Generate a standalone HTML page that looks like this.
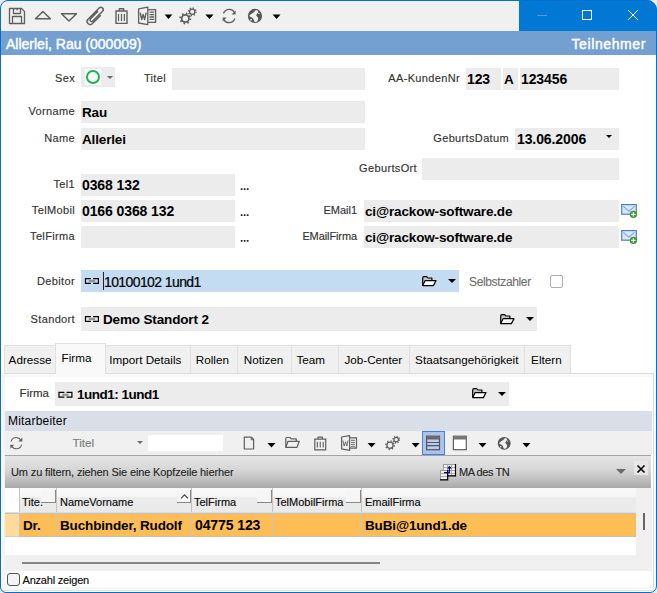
<!DOCTYPE html>
<html><head><meta charset="utf-8">
<style>
*{box-sizing:border-box;margin:0;padding:0}
html,body{width:657px;height:593px;overflow:hidden;background:#fff;font-family:"Liberation Sans",sans-serif}
#frame{position:absolute;left:0;top:0;width:657px;height:593px;border:1px solid #0070d0;border-radius:8px 10px 7px 6px;box-shadow:0 0 0 30px #ececec;z-index:100}
.a{position:absolute}
#tb{left:0;top:0;width:519px;height:31px;background:#f0f0f0}
#cap{left:519px;top:0;width:138px;height:31px;background:#0078d4}
#hdr{left:0;top:31px;width:657px;height:24px;background:#73a0d1;color:#fff;font-size:14px;line-height:23px}
.lbl{position:absolute;font-size:11px;letter-spacing:0.35px;color:#333;-webkit-text-stroke:0.15px #333;line-height:22px;white-space:nowrap}
.r{text-align:right;margin-top:-1px}
.f{position:absolute;background:#ececec;height:22px;font-size:13.5px;letter-spacing:-0.15px;font-weight:bold;line-height:22px;color:#000;padding-left:1px;padding-top:1px;white-space:nowrap;overflow:hidden}
.dots{position:absolute;font-size:11px;font-weight:bold;letter-spacing:-0.5px;line-height:22px;color:#000}
.d{font-size:14px;letter-spacing:-0.1px;padding-top:0}
.tab{position:absolute;top:345px;height:28px;background:#f0f0f0;border:1px solid #e0e0e0;border-bottom:none;font-size:11.7px;line-height:28px;text-align:left;color:#000;white-space:nowrap}
.arr{position:absolute;width:0;height:0;border-left:4px solid transparent;border-right:4px solid transparent;border-top:4px solid #000}
svg{position:absolute;overflow:visible}
</style></head><body>

 <div class="a" id="tb"></div>
 <div class="a" id="cap"></div>
 <div class="a" id="hdr"><span class="a" style="left:6px;top:2px;-webkit-text-stroke:0.45px #fff">Allerlei, Rau (000009)</span><span class="a" style="right:11px;top:2px;letter-spacing:0.6px;-webkit-text-stroke:0.45px #fff">Teilnehmer</span></div>

 <!-- form -->
 <div class="lbl r" style="left:20px;width:55px;top:69px;line-height:20px">Sex</div>
 <div class="a" style="left:81px;top:67px;width:34px;height:20px;background:#ececec"></div>
 <div class="a" style="left:85px;top:69px;width:16px;height:16px;background:#fff"></div>
 <div class="a" style="left:86px;top:70px;width:14px;height:14px;border:2.4px solid #1db450;border-radius:50%"></div>
 <div class="arr" style="left:106.8px;top:76px;border-left-width:3.3px;border-right-width:3.3px;border-top:3.6px solid #6a6a6a"></div>

 <div class="lbl r" style="left:120px;width:46px;top:68px">Titel</div>
 <div class="f" style="left:172px;top:68px;width:193px"></div>

 <div class="lbl r" style="left:380px;width:80px;top:68px">AA-KundenNr</div>
 <div class="f d" style="left:466px;top:68px;width:35px;padding-left:1px">123</div>
 <div class="f" style="left:503px;top:68px;width:15px;padding-left:1px">A</div>
 <div class="f d" style="left:520px;top:68px;width:99px;padding-left:1px">123456</div>

 <div class="lbl r" style="left:10px;width:65px;top:101px">Vorname</div>
 <div class="f" style="left:81px;top:101px;width:284px">Rau</div>
 <div class="lbl r" style="left:10px;width:65px;top:128px">Name</div>
 <div class="f" style="left:81px;top:128px;width:284px">Allerlei</div>

 <div class="lbl r" style="left:400px;width:109px;top:128px">GeburtsDatum</div>
 <div class="f d" style="left:515px;top:128px;width:104px;padding-left:2px">13.06.2006</div>
 <div class="arr" style="left:605.5px;top:135px;border-left-width:3px;border-right-width:3px;border-top:3px solid #000"></div>

 <div class="lbl r" style="left:330px;width:87px;top:158px">GeburtsOrt</div>
 <div class="f" style="left:422px;top:158px;width:197px"></div>

 <div class="lbl r" style="left:10px;width:65px;top:174px">Tel1</div>
 <div class="f d" style="left:81px;top:174px;width:154px">0368 132</div>
 <div class="lbl r" style="left:10px;width:65px;top:200px">TelMobil</div>
 <div class="f d" style="left:81px;top:200px;width:154px">0166 0368 132</div>
 <div class="lbl r" style="left:10px;width:65px;top:226px">TelFirma</div>
 <div class="f" style="left:81px;top:226px;width:154px"></div>

 <div class="lbl r" style="left:280px;width:77px;top:200px;letter-spacing:0">EMail1</div>
 <div class="f" style="left:364px;top:200px;width:255px">ci@rackow-software.de</div>
 <div class="lbl r" style="left:280px;width:77px;top:226px;letter-spacing:-0.1px">EMailFirma</div>
 <div class="f" style="left:364px;top:226px;width:255px">ci@rackow-software.de</div>

 <div class="lbl r" style="left:10px;width:65px;top:271px">Debitor</div>
 <div class="f" style="left:81px;top:270px;width:378px;background:#c4dcf2;padding-left:23px;font-weight:normal;font-size:14px;letter-spacing:-0.6px;-webkit-text-stroke:0.2px #000">10100102 1und1</div>
 <div class="a" style="left:103px;top:272px;width:1px;height:18px;background:#222"></div>
 <div class="arr" style="left:448px;top:279px"></div>
 <div class="lbl" style="left:469px;top:271px;color:#6e6e6e;-webkit-text-stroke:0.1px #6e6e6e;font-size:12px;letter-spacing:-0.35px">Selbstzahler</div>
 <div class="a" style="left:550px;top:275px;width:13px;height:13px;border:1px solid #b0b0b0;border-radius:2px;background:#fff"></div>

 <div class="lbl r" style="left:10px;width:65px;top:309px">Standort</div>
 <div class="f" style="left:81px;top:307px;width:456px;height:24px;line-height:24px;padding-left:22px">Demo Standort 2</div>
 <div class="arr" style="left:526px;top:317px"></div>

 <!-- tabs -->
 <div class="a" style="left:4px;top:373px;width:650px;height:230px;border:1px solid #dcdcdc;border-left-color:#f2f2f2;background:#fff"></div>
 <div class="a" style="left:2px;top:373px;width:2px;height:230px;background:#f6f6f6"></div>
 <div class="a" style="left:5px;top:374px;width:648px;height:3px;background:#f9f9f9"></div>
 <div class="tab" style="left:4px;width:52px;padding-left:3.6px">Adresse</div>
 <div class="tab" style="left:105px;width:86px;padding-left:3.3px">Import Details</div>
 <div class="tab" style="left:190px;width:48px;padding-left:4.8px">Rollen</div>
 <div class="tab" style="left:237px;width:55px;padding-left:5.7px">Notizen</div>
 <div class="tab" style="left:291px;width:48px;padding-left:4.5px">Team</div>
 <div class="tab" style="left:338px;width:72px;padding-left:5.4px">Job-Center</div>
 <div class="tab" style="left:409px;width:116px;padding-left:5.1px">Staatsangehörigkeit</div>
 <div class="tab" style="left:524px;width:47px;padding-left:6.1px">Eltern</div>
 <div class="tab" style="left:55px;width:51px;top:343px;height:30px;background:#f9f9f9;border-color:#e0e0e0;padding-left:5.6px;line-height:28px">Firma</div>
 <div class="a" style="left:56px;top:373px;width:49px;height:1px;background:#f9f9f9"></div>

 <div class="lbl r" style="left:5px;width:44px;top:382px;line-height:24px;font-size:11.5px;letter-spacing:0">Firma</div>
 <div class="f" style="left:55px;top:382px;width:454px;height:24px;line-height:24px;padding-left:22px;letter-spacing:-0.5px">1und1: 1und1</div>
 <div class="arr" style="left:498px;top:392px"></div>

 <div class="a" style="left:5px;top:411px;width:647px;height:20px;background:#d9dfe8;font-size:12px;letter-spacing:0.2px;line-height:20px;padding-left:3px">Mitarbeiter</div>
 <div class="a" style="left:5px;top:431px;width:647px;height:24px;background:#f0f0f0"></div>
 <div class="lbl" style="left:72.5px;top:432px;color:#7a7a7a;-webkit-text-stroke:0.1px #7a7a7a;font-size:11.7px;letter-spacing:0">Titel</div>
 <div class="arr" style="left:137px;top:441.3px;border-left-width:3.7px;border-right-width:3.7px;border-top:3.8px solid #6a6a6a"></div>
 <div class="a" style="left:148px;top:435px;width:75px;height:16px;background:#fff"></div>
 <div class="a" style="left:422px;top:431px;width:23px;height:24px;background:#abc2ea;border:1px solid #4a7fd6"></div>

 <!-- group panel -->
 <div class="a" style="left:5px;top:455px;width:646px;height:33px;background:linear-gradient(#e6e6e6,#d6d6d6 45%,#a9a9a9);border-top:1px solid #a4a4a4"></div>
 <div class="lbl" style="left:11px;top:461px;font-size:11px;letter-spacing:-0.13px;color:#222">Um zu filtern, ziehen Sie eine Kopfzeile hierher</div>
 <div class="lbl" style="left:459px;top:461px;font-size:11px;letter-spacing:-0.45px;color:#222">MA des TN</div>
 <div class="arr" style="left:616px;top:469px;border-left-width:5px;border-right-width:5px;border-top:5px solid #6a6a6a"></div>
 <div class="a" style="left:634px;top:461px;width:14px;height:14px;background:#e6e6e6"></div>
 <svg style="left:637px;top:465px" width="8" height="8"><path d="M0.5 0.5L7.5 7.5M7.5 0.5L0.5 7.5" stroke="#000" stroke-width="1.6"/></svg>

 <!-- grid -->
 <div class="a" style="left:5px;top:488px;width:647px;height:67px;background:#f0f0f0"></div>
 <div class="a" style="left:5px;top:488px;width:631px;height:67px;background:#fff"></div>
 <div class="a" style="left:19px;top:488px;width:617px;height:25px;background:linear-gradient(#f9f9f9 0,#f7f7f7 8px,#ebebeb 10px,#eaeaea)"></div>
 <div class="a" style="left:5px;top:513px;width:631px;height:24px;background:#ffbe55;border-top:1px solid #c4c4c4;border-bottom:1px solid #c8c0b0"></div>
 <div class="a" style="left:5px;top:513px;width:14px;height:24px;background:#ffdc9e;border-top:1px solid #c4c4c4;border-bottom:1px solid #d0d0d0"></div>
 <div class="a" style="left:643px;top:513px;width:2px;height:17px;background:#666"></div>
 
 <div class="a" style="left:19px;top:488px;width:1px;height:48px;background:#c4c4c4"></div>
 <div class="a" style="left:56px;top:488px;width:1px;height:48px;background:#c4c4c4"></div>
 <div class="a" style="left:191px;top:488px;width:1px;height:48px;background:#c4c4c4"></div>
 <div class="a" style="left:272px;top:488px;width:1px;height:48px;background:#c4c4c4"></div>
 <div class="a" style="left:361px;top:488px;width:1px;height:48px;background:#c4c4c4"></div>
 <div class="a" style="left:5px;top:512px;width:631px;height:1px;background:#dedede"></div>
 <div class="lbl" style="left:22px;top:491px;font-size:11px;letter-spacing:0;color:#000;line-height:22px">Tite.</div>
 <div class="lbl" style="left:60px;top:491px;font-size:11px;letter-spacing:0;color:#000;line-height:22px">NameVorname</div>
 <div class="lbl" style="left:194px;top:491px;font-size:11px;letter-spacing:0;color:#000;line-height:22px">TelFirma</div>
 <div class="lbl" style="left:275px;top:491px;font-size:11px;letter-spacing:0;color:#000;line-height:22px">TelMobilFirma</div>
 <div class="lbl" style="left:365px;top:491px;font-size:11px;letter-spacing:0;color:#000;line-height:22px">EmailFirma</div>
 <div class="a" style="left:41px;top:490px;width:15px;height:13px;background:#f6f6f6;border-right:1px solid #888;border-bottom:1px solid #888"></div>
 <div class="a" style="left:257px;top:490px;width:15px;height:13px;background:#f6f6f6;border-right:1px solid #888;border-bottom:1px solid #888"></div>
 <div class="a" style="left:346px;top:490px;width:15px;height:13px;background:#f6f6f6;border-right:1px solid #888;border-bottom:1px solid #888"></div>
 <div class="a" style="left:177px;top:490px;width:14px;height:13px;background:#f6f6f6;border-right:1px solid #888;border-bottom:1px solid #888"></div>
 <svg style="left:180px;top:493px" width="9" height="6"><path d="M1 5.3L4.5 1.8L8 5.3" stroke="#444" fill="none" stroke-width="1.1"/></svg>
 <div class="f" style="left:20px;top:513px;width:36px;height:23px;line-height:23px;background:none;padding-left:3px">Dr.</div>
 <div class="f" style="left:57px;top:513px;width:134px;height:23px;line-height:23px;background:none;padding-left:3px">Buchbinder, Rudolf</div>
 <div class="f d" style="padding-top:1px;left:192px;top:513px;width:80px;height:23px;line-height:23px;background:none;padding-left:3px">04775 123</div>
 <div class="f" style="left:362px;top:513px;width:200px;height:23px;line-height:23px;background:none;padding-left:3px">BuBi@1und1.de</div>

 <div class="a" style="left:5px;top:555px;width:647px;height:16px;background:#f0f0f0"></div>
 <div class="a" style="left:22px;top:562px;width:358px;height:2px;background:#858585"></div>

 <div class="a" style="left:7px;top:573px;width:13px;height:13px;border:1px solid #555;border-radius:3px;background:#f4f4f4"></div>
 <div class="lbl" style="left:22.5px;top:570px;font-size:11px;letter-spacing:-0.2px;color:#000;line-height:20px">Anzahl zeigen</div>

 <svg style="left:0;top:0;z-index:50" width="657" height="593" viewBox="0 0 657 593">
  <g fill="none" stroke="#5f5f5f" stroke-width="1.4" stroke-linejoin="round">
   <!-- save -->
   <path d="M9.5 8.5H21.5L24.5 11.5V23.5H9.5Z" stroke-width="1.3"/>
   <path d="M13.5 8.5V13.5H20.5V8.5" stroke-width="1.3"/>
   <path d="M12.5 23.5V16.5H21.5V23.5" stroke-width="1.3"/>
   <path d="M17 9V10.6" stroke-width="1.2"/>
   <!-- up / down -->
   <path d="M35.5 18.7L42.9 11.5L50.4 18.7Z" stroke-width="1.5"/>
   <path d="M61.5 13.8L76.5 13.8L69 21Z" stroke-width="1.5"/>
   <!-- paperclip -->
   <path transform="translate(95.6 16) rotate(-45)" d="M4.2 3.1H-7.6A3.1 3.1 0 0 1 -7.6 -3.1H8.2A2.35 2.35 0 0 1 8.2 1.6H-5.6A1.6 1.6 0 0 1 -5.6 -1.6H5" stroke-width="1.45"/>
   <!-- trash -->
   <path d="M115.3 11H127.6M119.3 10.8V8.8H123.6V10.8M116 11.5V23.4H127V11.5" stroke-width="1.4"/>
   <path d="M118.5 14V21M121.5 14V21M124.4 14V21" stroke-width="1.2"/>
   <!-- word -->
   <path d="M138.6 8.8L147.8 7.2V24.6L138.6 23Z" stroke-width="1.3"/>
   <path d="M147.8 9.6H155.6V22.4H147.8" stroke-width="1.3"/>
   <path d="M149.5 12.2H154.2M149.5 14.6H154.2M149.5 17H154.2M149.5 19.4H154.2" stroke-width="1.3"/>
   <path d="M140.2 12.6L141.7 19.6L143.1 14.4L144.6 19.6L146.1 12.6" stroke-width="1.4"/>
   <!-- refresh -->
   <path d="M223.4 13.6C224.6 10.6 227.2 9.4 229.3 9.4C231.6 9.4 233.6 10.7 234.4 12.4" stroke-width="1.3"/>
   <path d="M234.9 18.4C233.7 21.4 231.1 22.6 229 22.6C226.7 22.6 224.7 21.3 223.9 19.6" stroke-width="1.3"/>
  </g>
  <g fill="#000">
   <path d="M164.7 14.5H172.3L168.5 19Z"/>
   <path d="M205.3 14.5H213.6L209.45 19Z"/>
   <path d="M272.6 14.5H280.5L276.55 19Z"/>
  </g>
  <g fill="#5f5f5f">
   <path d="M235.6 10.6L235.6 14.6L231.6 14.6Z"/>
   <path d="M222.7 21.4L222.7 17.4L226.7 17.4Z"/>
  </g>

  <g fill="none" stroke="#5f5f5f">
   <circle cx="185.3" cy="18.5" r="3.6" stroke-width="1.7"/>
   <circle cx="185.3" cy="18.5" r="5" stroke-width="1.9" stroke-dasharray="1.5 2.427"/>
   <circle cx="192.2" cy="11.7" r="2.6" stroke-width="1.3"/>
   <circle cx="192.2" cy="11.7" r="3.7" stroke-width="1.6" stroke-dasharray="1.2 1.706"/>
  </g>
  <g id="gl">
  <circle cx="254.95" cy="15.95" r="7.1" fill="#555"/>
  <path fill="#f0f0f0" d="M255.6 10.3L257.3 10.3L258.2 11.5L258 12.5L257.2 13.5L256.5 14.5L256.2 15.5L257.2 16.5L257.8 17.5L258.2 18.5L258.1 19.5L257.7 20.5L257.1 21.5L256 22L254.8 21.9L254.4 21.5L254 20.5L253.6 19.5L253 18.5L252 17.5L249.6 16.5L249.4 15.5L250.5 14.5L252 13.5L253.5 12.5L254.6 11.5Z"/>
  <circle cx="258.9" cy="13.5" r="0.65" fill="#f0f0f0"/>
  <circle cx="251.1" cy="19.7" r="0.85" fill="#f0f0f0"/>
  </g>
  <!-- caption buttons -->
  <path d="M537 15.5H547" stroke="#4d9be0" stroke-width="1"/>
  <rect x="582.5" y="10.5" width="9" height="9" fill="none" stroke="#fff" stroke-width="1"/>
  <path d="M628 10L638 20M638 10L628 20" stroke="#fff" stroke-width="1"/>

  <path d="M240.8 188.2h1.7v1.8h-1.7zM243.8 188.2h1.7v1.8h-1.7zM246.8 188.2h1.7v1.8h-1.7z" fill="#222"/>
  <path d="M240.8 214.2h1.7v1.8h-1.7zM243.8 214.2h1.7v1.8h-1.7zM246.8 214.2h1.7v1.8h-1.7z" fill="#222"/>
  <path d="M240.8 240h1.7v1.8h-1.7zM243.8 240h1.7v1.8h-1.7zM246.8 240h1.7v1.8h-1.7z" fill="#222"/>
  <!-- envelopes -->
  <g>
   <rect x="621.7" y="204.6" width="14.6" height="9.6" fill="#dbe7fa" stroke="#4a7fd0" stroke-width="1.2"/>
   <path d="M623.3 206.4L628.9 211.2L634.6 206.4" fill="none" stroke="#7ea6e6" stroke-width="1.1"/>
   <circle cx="633.4" cy="214.4" r="3.6" fill="#3b9a2c"/>
   <path d="M633.4 212.2V216.6M631.2 214.4H635.6" stroke="#fff" stroke-width="1.3"/>
   <rect x="621.7" y="230.6" width="14.6" height="9.6" fill="#dbe7fa" stroke="#4a7fd0" stroke-width="1.2"/>
   <path d="M623.3 232.4L628.9 237.2L634.6 232.4" fill="none" stroke="#7ea6e6" stroke-width="1.1"/>
   <circle cx="633.4" cy="240.4" r="3.6" fill="#3b9a2c"/>
   <path d="M633.4 238.2V242.6M631.2 240.4H635.6" stroke="#fff" stroke-width="1.3"/>
  </g>
  <!-- link icons -->
  <g id="lk">
   <path d="M88.8 281H95.1" stroke="#939393" stroke-width="2.2"/>
   <path d="M90.9 278.6H85.5V283.4H90.9M93 278.6H98.4V283.4H93" fill="none" stroke="#000" stroke-width="1.2"/>
  </g>
  <use href="#lk" x="0" y="38"/>
  <use href="#lk" x="-26.5" y="113.8"/>
  <!-- folder icons -->
  <g id="fd">
   <path d="M422.7 285.6V278C422.7 277.2 423.2 276.6 424 276.6H426.6L428 278H431.9V280.6" fill="#c6c6c6" stroke="#000" stroke-width="1.2" stroke-linejoin="round"/>
   <path d="M422.7 285.6L425.2 280.6H436L433.4 285.6Z" fill="#fff" stroke="#000" stroke-width="1.2" stroke-linejoin="round"/>
  </g>
  <use href="#fd" x="78" y="38"/>
  <use href="#fd" x="50" y="112"/>
  <!-- MA icon -->
  <g>
   <rect x="443.5" y="464.5" width="12" height="11" fill="#f4f4f4" stroke="#999" stroke-width="1"/>
   <path d="M443.5 467.5H455.5M443.5 470.5H455.5M443.5 473.5H455.5M447.5 464.5V475.5M451.5 464.5V475.5" stroke="#aaa" stroke-width="1"/>
   <path d="M455.5 464V475.8H448" fill="none" stroke="#000" stroke-width="1.2"/>
   <rect x="440.5" y="470.5" width="7" height="9" fill="#eee" stroke="#999" stroke-width="1"/>
   <path d="M440.5 473.5H447.5M440.5 476.5H447.5" stroke="#aaa" stroke-width="1"/>
   <path d="M447.7 470V479.8H440" fill="none" stroke="#000" stroke-width="1.2"/>
   <path d="M444 472.7H449.4V468" fill="none" stroke="#000090" stroke-width="1.3"/>
   <path d="M447 468.5L449.4 465.8L451.8 468.5Z" fill="#000090"/>
  </g>
  <!-- toolbar 2 -->
  <g fill="none" stroke="#5f5f5f" stroke-width="1.2" stroke-linejoin="round">
   <path d="M11 441.6C11.7 439 13.6 437.4 16.1 437.4C18.1 437.4 19.9 438.5 20.8 440.3" stroke-width="1.05" stroke="#666"/>
   <path d="M21.6 444.6C20.9 447.2 19 448.8 16.5 448.8C14.5 448.8 12.7 447.7 11.8 445.9" stroke-width="1.05" stroke="#666"/>
   <path d="M244.3 437.2H251.4L253.6 439.5V449H244.3Z"/>
   <path d="M251.2 437.2V439.7H253.6" stroke-width="1"/>
   <path d="M285.8 447.3V438.6C285.8 437.9 286.2 437.5 286.9 437.5H290L291.3 438.8H296.3V441.3"/>
   <path d="M285.8 447.3L288 441.3H299.3L297 447.3Z"/>
   <path d="M314.1 439.2H326.4M318 439V437.2H322.4V439M314.8 439.7V449.8H325.7V439.7"/>
   <path d="M317.3 441.8V447.6M320.25 441.8V447.6M323.2 441.8V447.6" stroke-width="1.1"/>
   <path d="M341.6 437L349.6 435.6V450.3L341.6 448.9Z" stroke-width="1.2"/>
   <path d="M349.6 437.8H356.5V448.2H349.6" stroke-width="1.2"/>
   <path d="M351 440.3H355M351 442.3H355M351 444.3H355M351 446.3H355" stroke-width="0.9"/>
   <path d="M342.9 440.4L344.1 446.1L345.5 441.8L346.8 446.1L348 440.4" stroke-width="0.9"/>
   <circle cx="390" cy="445.2" r="3.1" stroke-width="1.3"/>
   <circle cx="390" cy="445.2" r="4.3" stroke-width="1.5" stroke-dasharray="1.2 2.177"/>
   <circle cx="396.2" cy="439.6" r="2.25" stroke-width="1.15"/>
   <circle cx="396.2" cy="439.6" r="3.2" stroke-width="1.4" stroke-dasharray="1.05 1.463"/>
  </g>
  <g fill="#5f5f5f">
   <path d="M22.3 437.5V441.4H18.4Z"/>
   <path d="M10.3 448.7V444.8H14.2Z"/>
  </g>
  <g fill="#000">
   <path d="M267.5 443H275.5L271.5 447.5Z"/>
   <path d="M367.6 443H375.5L371.55 447.5Z"/>
   <path d="M411.7 443H419.6L415.65 447.5Z"/>
   <path d="M478.6 443H486.5L482.55 447.5Z"/>
   <path d="M522.5 443H530.4L526.45 447.5Z"/>
  </g>
  <!-- list icon (highlighted) -->
  <rect x="426.6" y="436.2" width="12.9" height="13.5" fill="#b4cdf4" stroke="#555" stroke-width="1.2"/>
  <rect x="426.6" y="436.2" width="12.9" height="3.3" fill="#6a6a6a"/>
  <path d="M426.6 442.5H439.5M426.6 445.6H439.5" stroke="#555" stroke-width="1.1"/>
  <!-- window icon -->
  <rect x="453.4" y="436.2" width="12.9" height="13.5" fill="#fff" stroke="#5f5f5f" stroke-width="1.2"/>
  <rect x="453.4" y="436.2" width="12.9" height="3.3" fill="#777"/>
  <!-- globe 2 -->
  <use href="#gl" transform="translate(504.2 443.3) scale(0.9) translate(-254.95 -15.95)"/>
 </svg>
<div class="a" style="left:1px;top:587px;width:655px;height:3px;background:#f8f8f8"></div>
 <div class="a" style="left:1px;top:590px;width:655px;height:1px;background:#e4e4e4"></div>
<div id="frame"></div>
</body></html>
